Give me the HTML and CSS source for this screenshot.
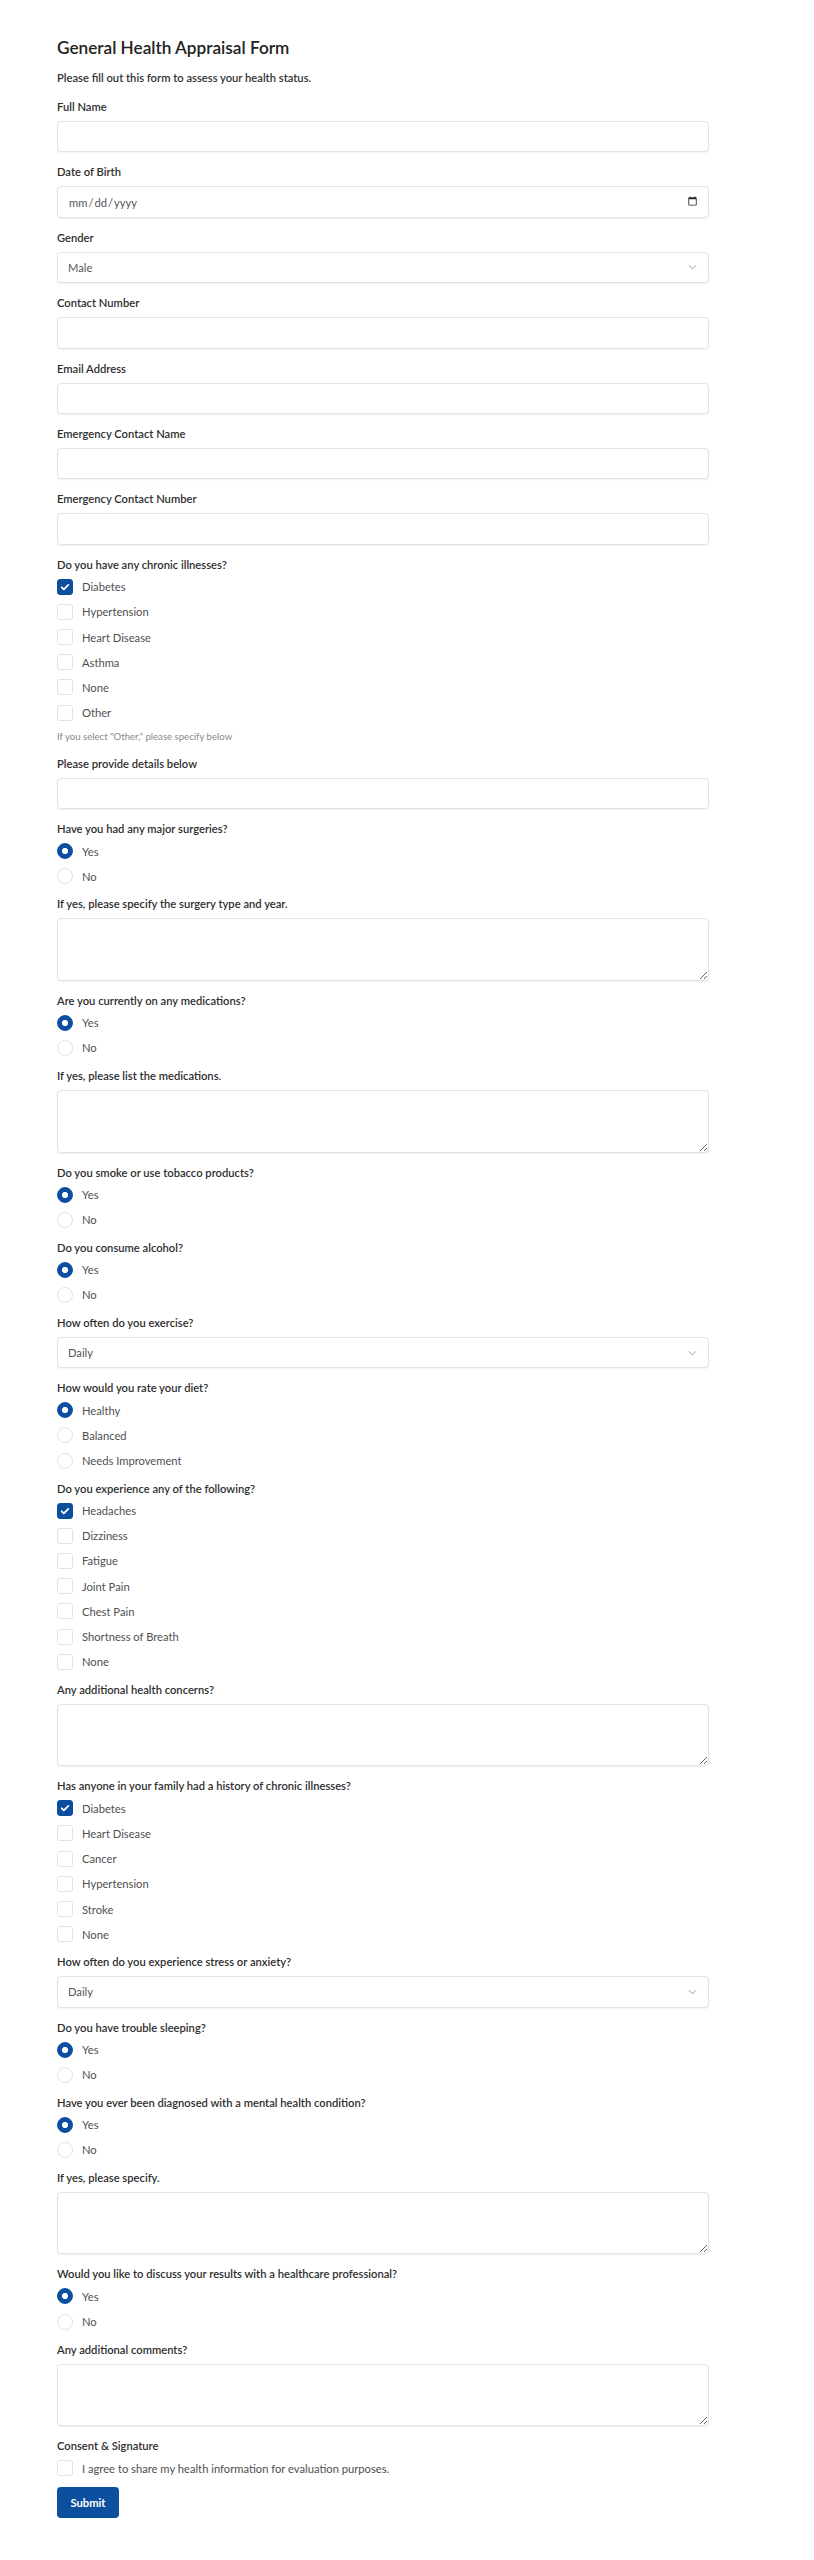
FILE: index.html
```html
<!DOCTYPE html>
<html lang="en">
<head>
<meta charset="utf-8">
<title>General Health Appraisal Form</title>
<link rel="stylesheet" href="styles.css">
</head>
<body>
<form class="form">
  <h1 class="title">General Health Appraisal Form</h1>
  <p class="intro">Please fill out this form to assess your health status.</p>

  <div class="field"><label class="lbl">Full Name</label><input class="control" type="text"></div>
  <div class="field"><label class="lbl">Date of Birth</label><input class="control date" type="date"></div>
  <div class="field"><label class="lbl">Gender</label>
    <div class="select-wrap"><select class="control select"><option>Male</option><option>Female</option><option>Other</option></select>
      <svg class="chev" viewBox="0 0 10 6"><path d="M1 1l4 4 4-4"/></svg></div>
  </div>
  <div class="field"><label class="lbl">Contact Number</label><input class="control" type="tel"></div>
  <div class="field"><label class="lbl">Email Address</label><input class="control" type="email"></div>
  <div class="field"><label class="lbl">Emergency Contact Name</label><input class="control" type="text"></div>
  <div class="field"><label class="lbl">Emergency Contact Number</label><input class="control" type="tel"></div>

  <div class="group">
    <div class="lbl">Do you have any chronic illnesses?</div>
    <label class="opt"><span class="box on"><svg viewBox="0 0 16 16"><path d="M4.2 8.3l2.5 2.5 5.1-5.3"/></svg></span>Diabetes</label>
    <label class="opt"><span class="box"></span>Hypertension</label>
    <label class="opt"><span class="box"></span>Heart Disease</label>
    <label class="opt"><span class="box"></span>Asthma</label>
    <label class="opt"><span class="box"></span>None</label>
    <label class="opt"><span class="box"></span>Other</label>
    <p class="hint">If you select "Other," please specify below</p>
  </div>
  <div class="field"><label class="lbl">Please provide details below</label><input class="control" type="text"></div>

  <div class="group">
    <div class="lbl">Have you had any major surgeries?</div>
    <label class="opt"><span class="dot on"></span>Yes</label>
    <label class="opt"><span class="dot"></span>No</label>
  </div>
  <div class="field"><label class="lbl">If yes, please specify the surgery type and year.</label><textarea class="control area"></textarea></div>

  <div class="group">
    <div class="lbl">Are you currently on any medications?</div>
    <label class="opt"><span class="dot on"></span>Yes</label>
    <label class="opt"><span class="dot"></span>No</label>
  </div>
  <div class="field"><label class="lbl">If yes, please list the medications.</label><textarea class="control area"></textarea></div>

  <div class="group">
    <div class="lbl">Do you smoke or use tobacco products?</div>
    <label class="opt"><span class="dot on"></span>Yes</label>
    <label class="opt"><span class="dot"></span>No</label>
  </div>
  <div class="group">
    <div class="lbl">Do you consume alcohol?</div>
    <label class="opt"><span class="dot on"></span>Yes</label>
    <label class="opt"><span class="dot"></span>No</label>
  </div>
  <div class="field"><label class="lbl">How often do you exercise?</label>
    <div class="select-wrap"><select class="control select"><option>Daily</option><option>Weekly</option><option>Rarely</option></select>
      <svg class="chev" viewBox="0 0 10 6"><path d="M1 1l4 4 4-4"/></svg></div>
  </div>

  <div class="group">
    <div class="lbl">How would you rate your diet?</div>
    <label class="opt"><span class="dot on"></span>Healthy</label>
    <label class="opt"><span class="dot"></span>Balanced</label>
    <label class="opt"><span class="dot"></span>Needs Improvement</label>
  </div>
  <div class="group">
    <div class="lbl">Do you experience any of the following?</div>
    <label class="opt"><span class="box on"><svg viewBox="0 0 16 16"><path d="M4.2 8.3l2.5 2.5 5.1-5.3"/></svg></span>Headaches</label>
    <label class="opt"><span class="box"></span>Dizziness</label>
    <label class="opt"><span class="box"></span>Fatigue</label>
    <label class="opt"><span class="box"></span>Joint Pain</label>
    <label class="opt"><span class="box"></span>Chest Pain</label>
    <label class="opt"><span class="box"></span>Shortness of Breath</label>
    <label class="opt"><span class="box"></span>None</label>
  </div>
  <div class="field"><label class="lbl">Any additional health concerns?</label><textarea class="control area"></textarea></div>

  <div class="group">
    <div class="lbl">Has anyone in your family had a history of chronic illnesses?</div>
    <label class="opt"><span class="box on"><svg viewBox="0 0 16 16"><path d="M4.2 8.3l2.5 2.5 5.1-5.3"/></svg></span>Diabetes</label>
    <label class="opt"><span class="box"></span>Heart Disease</label>
    <label class="opt"><span class="box"></span>Cancer</label>
    <label class="opt"><span class="box"></span>Hypertension</label>
    <label class="opt"><span class="box"></span>Stroke</label>
    <label class="opt"><span class="box"></span>None</label>
  </div>
  <div class="field"><label class="lbl">How often do you experience stress or anxiety?</label>
    <div class="select-wrap"><select class="control select"><option>Daily</option><option>Weekly</option><option>Rarely</option></select>
      <svg class="chev" viewBox="0 0 10 6"><path d="M1 1l4 4 4-4"/></svg></div>
  </div>

  <div class="group">
    <div class="lbl">Do you have trouble sleeping?</div>
    <label class="opt"><span class="dot on"></span>Yes</label>
    <label class="opt"><span class="dot"></span>No</label>
  </div>
  <div class="group">
    <div class="lbl">Have you ever been diagnosed with a mental health condition?</div>
    <label class="opt"><span class="dot on"></span>Yes</label>
    <label class="opt"><span class="dot"></span>No</label>
  </div>
  <div class="field"><label class="lbl">If yes, please specify.</label><textarea class="control area"></textarea></div>

  <div class="group">
    <div class="lbl">Would you like to discuss your results with a healthcare professional?</div>
    <label class="opt"><span class="dot on"></span>Yes</label>
    <label class="opt"><span class="dot"></span>No</label>
  </div>
  <div class="field"><label class="lbl">Any additional comments?</label><textarea class="control area"></textarea></div>

  <div class="group consent">
    <div class="lbl">Consent &amp; Signature</div>
    <label class="opt"><span class="box"></span>I agree to share my health information for evaluation purposes.</label>
  </div>
  <button class="submit" type="button">Submit</button>
</form>
</body>
</html>
```

FILE: styles.css
```css
* { box-sizing: border-box; }

html, body {
  margin: 0;
  background: #ffffff;
}

body {
  font-family: "Lato", "Liberation Sans", sans-serif;
  font-size: 11.2px;
  color: #333333;
}

.form {
  width: 652px;
  margin-left: 57px;
  padding: 38px 0 40px;
}

.title {
  margin: 0;
  font-size: 17.2px;
  line-height: 20px;
  font-weight: 600;
  color: #222222;
}

.intro {
  margin: 12px 0 13px;
  line-height: 16px;
  font-weight: 600;
  color: #333333;
}

.lbl {
  display: block;
  line-height: 16px;
  font-weight: 600;
  color: #2e2e2e;
}

.field {
  margin-bottom: 12px;
}

.field .lbl {
  margin-bottom: 6px;
}

.control {
  display: block;
  width: 100%;
  height: 31.4px;
  margin: 0;
  padding: 0 10px;
  border: 1px solid #e1e3e6;
  border-radius: 4px;
  background: #ffffff;
  box-shadow: 0 1px 2px rgba(0, 0, 0, 0.06);
  font-family: inherit;
  font-size: 11.2px;
  color: #555555;
  outline: none;
}

.date {
  color: #555555;
  padding-right: 8px;
}

.date::-webkit-calendar-picker-indicator {
  opacity: 0.85;
}

.area {
  height: 62.6px;
  padding: 6px 10px;
  resize: vertical;
}

.select-wrap {
  position: relative;
}

.select {
  appearance: none;
  -webkit-appearance: none;
}

.chev {
  position: absolute;
  right: 12px;
  top: 50%;
  width: 9px;
  height: 6px;
  margin-top: -3px;
  fill: none;
  stroke: #9a9a9a;
  stroke-width: 1.1;
  pointer-events: none;
}

.group {
  margin-bottom: 7.4px;
}

.group .lbl {
  margin-bottom: 1.4px;
}

.opt {
  display: flex;
  align-items: center;
  gap: 9px;
  height: 25.2px;
  color: #505050;
}

.box,
.dot {
  flex: none;
  width: 16px;
  height: 16px;
  border: 1px solid #e0e2e5;
  background: #ffffff;
}

.box {
  border-radius: 3px;
  display: flex;
  align-items: center;
  justify-content: center;
}

.box.on {
  background: #0b4f9e;
  border-color: #0b4f9e;
}

.box svg {
  width: 14px;
  height: 14px;
  fill: none;
  stroke: #ffffff;
  stroke-width: 2;
  stroke-linecap: round;
  stroke-linejoin: round;
}

.dot {
  border-radius: 50%;
}

.dot.on {
  border-color: #0b4f9e;
  background: radial-gradient(circle, #ffffff 0 2.8px, #0b4f9e 3.3px);
}

.hint {
  margin: 4.4px 0 12px;
  line-height: 14px;
  font-size: 9.6px;
  color: #8a8a8a;
}

.group.consent {
  margin-bottom: 6.4px;
}

.submit {
  display: block;
  width: 62px;
  height: 31px;
  padding: 0;
  border: none;
  border-radius: 4px;
  background: #0b4f9e;
  color: #ffffff;
  font-family: inherit;
  font-size: 11.2px;
  font-weight: 700;
  cursor: pointer;
}
```
